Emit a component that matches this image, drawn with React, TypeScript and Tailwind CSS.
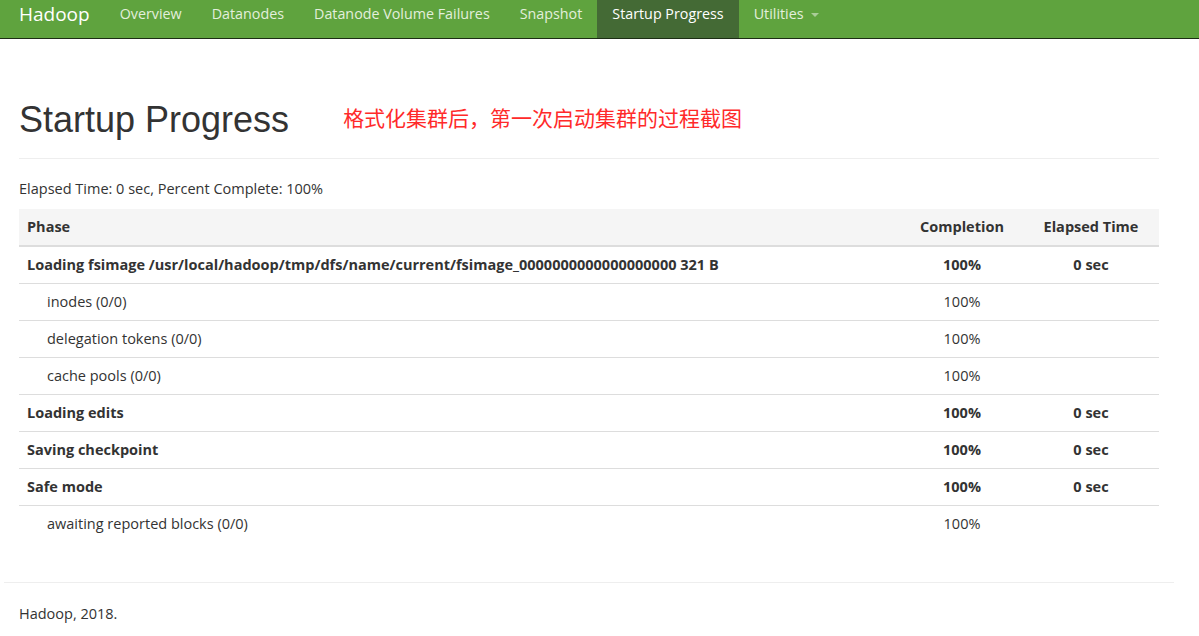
const navItems = [
  "Overview",
  "Datanodes",
  "Datanode Volume Failures",
  "Snapshot",
  "Startup Progress",
];

type Row = {
  phase: string;
  completion: string;
  elapsed?: string;
  sub?: boolean;
};

const rows: Row[] = [
  {
    phase:
      "Loading fsimage /usr/local/hadoop/tmp/dfs/name/current/fsimage_0000000000000000000 321 B",
    completion: "100%",
    elapsed: "0 sec",
  },
  { phase: "inodes (0/0)", completion: "100%", sub: true },
  { phase: "delegation tokens (0/0)", completion: "100%", sub: true },
  { phase: "cache pools (0/0)", completion: "100%", sub: true },
  { phase: "Loading edits", completion: "100%", elapsed: "0 sec" },
  { phase: "Saving checkpoint", completion: "100%", elapsed: "0 sec" },
  { phase: "Safe mode", completion: "100%", elapsed: "0 sec" },
  { phase: "awaiting reported blocks (0/0)", completion: "100%", sub: true },
];

export default function App() {
  return (
    <div className="min-h-[636px] bg-white text-[14.5px] leading-5 text-[#333] font-['Open_Sans','Noto_Sans',sans-serif]">
      <nav className="h-[39px] bg-[#5fa33e] border-b border-[#1d2e15]">
        <div className="ml-[4px] w-[1170px] px-[15px] flex items-stretch h-[38px]">
          <span className="pr-[15px] pt-[2px] text-[19px] leading-6 text-white">
            Hadoop
          </span>
          {navItems.map((item) => (
            <span
              key={item}
              className={
                item === "Startup Progress"
                  ? "px-[15px] pt-[4px] text-[14.3px] leading-5 text-white bg-[#446a35]"
                  : "px-[15px] pt-[4px] text-[14.3px] leading-5 text-[#e3efdc]"
              }
            >
              {item}
            </span>
          ))}
          <span className="px-[15px] pt-[4px] text-[14.3px] leading-5 text-[#e3efdc] flex items-start gap-[7px]">
            Utilities
            <span className="inline-block w-0 h-0 border-x-[4px] border-x-transparent border-t-[4px] border-t-[#a9cc97] mt-[9px]" />
          </span>
        </div>
      </nav>

      <div className="ml-[4px] w-[1170px] px-[15px]">
        <div className="pt-[61px] pb-[18px] border-b border-[#eee] flex items-center">
          <h1 className="text-[36px] leading-[1.1] font-['Liberation_Sans',Arial,sans-serif] text-[#333]">
            Startup Progress
          </h1>
          <span className="ml-[54px] -mt-[6px] text-[21px] leading-7 text-[#ff2a2a] font-['Noto_Sans_CJK_SC',sans-serif]">
            格式化集群后，第一次启动集群的过程截图
          </span>
        </div>

        <p className="mt-[20px]">Elapsed Time: 0 sec, Percent Complete: 100%</p>

        <table className="mt-[10px] w-full border-collapse">
          <thead>
            <tr className="bg-[#f5f5f5] border-b-2 border-[#ddd]">
              <th className="px-2 py-2 text-left font-bold">Phase</th>
              <th className="px-2 py-2 w-[122px] text-center font-bold">
                Completion
              </th>
              <th className="px-2 py-2 w-[136px] text-center font-bold">
                Elapsed Time
              </th>
            </tr>
          </thead>
          <tbody>
            {rows.map((r, i) => (
              <tr
                key={i}
                className={
                  i < rows.length - 1 ? "border-b border-[#ddd]" : ""
                }
              >
                <td
                  className={
                    r.sub
                      ? "pl-[28px] pr-2 py-2"
                      : "px-2 py-2 font-bold"
                  }
                >
                  {r.phase}
                </td>
                <td
                  className={
                    r.sub
                      ? "px-2 py-2 text-center"
                      : "px-2 py-2 text-center font-bold"
                  }
                >
                  {r.completion}
                </td>
                <td className="px-2 py-2 text-center font-bold">
                  {r.elapsed ?? ""}
                </td>
              </tr>
            ))}
          </tbody>
        </table>

        <div className="-mx-[15px] mt-[40px] border-t border-[#eee]" />
        <p className="mt-[21px]">Hadoop, 2018.</p>
      </div>
    </div>
  );
}
